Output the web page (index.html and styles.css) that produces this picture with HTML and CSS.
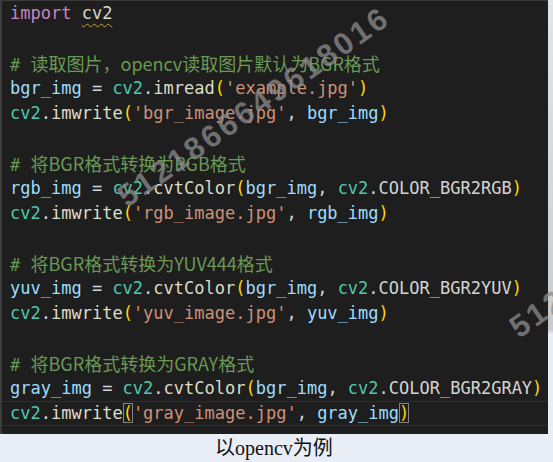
FILE: index.html
```html
<!DOCTYPE html>
<html lang="zh">

<head>
  <meta charset="UTF-8">
  <meta name="viewport" content="width=device-width, initial-scale=1.0">
  <title>以opencv为例</title>
  <link rel="stylesheet" href="styles.css">
</head>

<body>
  <div class="page">
    <div class="shot">
      <div class="editor">
        <div class="ln"><span class="kw">import</span> <span class="warn">cv2</span></div>
        <div class="ln"></div>
        <div class="ln cm"># <span class="zh">读取图片，opencv读取图片默认为BGR格式</span></div>
        <div class="ln"><span class="var">bgr_img</span> = <span class="mod">cv2</span>.<span class="fn">imread</span><span class="p">(</span><span class="str">'example.jpg'</span><span class="p">)</span></div>
        <div class="ln"><span class="mod">cv2</span>.<span class="fn">imwrite</span><span class="p">(</span><span class="str">'bgr_image.jpg'</span>, <span class="var">bgr_img</span><span class="p">)</span></div>
        <div class="ln"></div>
        <div class="ln cm"># <span class="zh">将BGR格式转换为RGB格式</span></div>
        <div class="ln"><span class="var">rgb_img</span> = <span class="mod">cv2</span>.<span class="fn">cvtColor</span><span class="p">(</span><span class="var">bgr_img</span>, <span class="mod">cv2</span>.COLOR_BGR2RGB<span class="p">)</span></div>
        <div class="ln"><span class="mod">cv2</span>.<span class="fn">imwrite</span><span class="p">(</span><span class="str">'rgb_image.jpg'</span>, <span class="var">rgb_img</span><span class="p">)</span></div>
        <div class="ln"></div>
        <div class="ln cm"># <span class="zh">将BGR格式转换为YUV444格式</span></div>
        <div class="ln"><span class="var">yuv_img</span> = <span class="mod">cv2</span>.<span class="fn">cvtColor</span><span class="p">(</span><span class="var">bgr_img</span>, <span class="mod">cv2</span>.COLOR_BGR2YUV<span class="p">)</span></div>
        <div class="ln"><span class="mod">cv2</span>.<span class="fn">imwrite</span><span class="p">(</span><span class="str">'yuv_image.jpg'</span>, <span class="var">yuv_img</span><span class="p">)</span></div>
        <div class="ln"></div>
        <div class="ln cm"># <span class="zh">将BGR格式转换为GRAY格式</span></div>
        <div class="ln"><span class="var">gray_img</span> = <span class="mod">cv2</span>.<span class="fn">cvtColor</span><span class="p">(</span><span class="var">bgr_img</span>, <span class="mod">cv2</span>.COLOR_BGR2GRAY<span class="p">)</span></div>
        <div class="ln current"><span class="mod">cv2</span>.<span class="fn">imwrite</span><span class="p match">(</span><span class="str">'gray_image.jpg'</span>, <span class="var">gray_img</span><span class="p match">)</span></div>
      </div>
      <div class="edge"></div>
    </div>
    <div class="caption">以opencv为例</div>

    <!-- watermark tiles -->
    <div class="watermark wm-1">5121866649618016</div>
    <div class="watermark wm-2">5121866649618016</div>
  </div>
</body>

</html>
```

FILE: styles.css
```css
:root {
  --editor-bg: #1e1e1e;
  --text: #d4d4d4;
  --keyword: #c586c0;
  --module: #4ec9b0;
  --variable: #9cdcfe;
  --function: #dcdcc8;
  --string: #ce9178;
  --bracket: #ffd700;
  --comment: #6a9955;
}

* {
  margin: 0;
  padding: 0;
  box-sizing: border-box;
}

body {
  background: #e9eef6;
}

.page {
  position: relative;
  width: 553px;
  height: 462px;
  overflow: hidden;
  background: #e9eef6;
}

.shot {
  display: flex;
  height: 434px;
}

.editor {
  width: 548px;
  background: var(--editor-bg);
  border-top: 1px solid #3a3a3a;
  border-left: 2px solid #3c3c3c;
  padding-left: 8px;
  font-family: "DejaVu Sans Mono", "Liberation Mono", monospace;
  font-size: 17px;
  color: var(--text);
}

.edge {
  flex: 1;
  background: linear-gradient(to bottom, #e3e5e9 0, #c9cbcf 330px, #e9eef6 334px);
}

.ln {
  height: 25px;
  line-height: 25px;
  white-space: pre;
}

.ln.current {
  margin-left: -8px;
  padding-left: 8px;
  box-shadow: inset 0 1px #2e2e2e, inset 0 -1px #2e2e2e;
}

.kw {
  color: var(--keyword);
}

.warn {
  color: #d8d8cc;
  text-decoration: underline wavy #c9a227;
  text-decoration-thickness: 1px;
  text-underline-offset: 4px;
}

.mod {
  color: var(--module);
}

.var {
  color: var(--variable);
}

.fn {
  color: var(--function);
}

.str {
  color: var(--string);
}

.p {
  color: var(--bracket);
}

.match {
  box-shadow: inset 0 0 0 1px #858585;
}

.cm {
  color: var(--comment);
}

.cm .zh {
  font-family: "Noto Sans CJK SC", sans-serif;
  font-size: 18px;
}

.caption {
  width: 548px;
  height: 28px;
  line-height: 28px;
  text-align: center;
  font-family: "Liberation Serif", "Noto Sans CJK SC", serif;
  font-size: 20px;
  color: #111;
}

.watermark {
  position: absolute;
  font-family: "Liberation Sans", Arial, sans-serif;
  font-weight: bold;
  font-size: 31px;
  line-height: 31px;
  letter-spacing: 3px;
  white-space: nowrap;
  color: rgba(140, 140, 140, 0.75);
  transform: rotate(-35deg);
  transform-origin: 0 50%;
  pointer-events: none;
}

.wm-1 {
  left: 121px;
  top: 184px;
}

.wm-2 {
  left: 513px;
  top: 315px;
}
```
